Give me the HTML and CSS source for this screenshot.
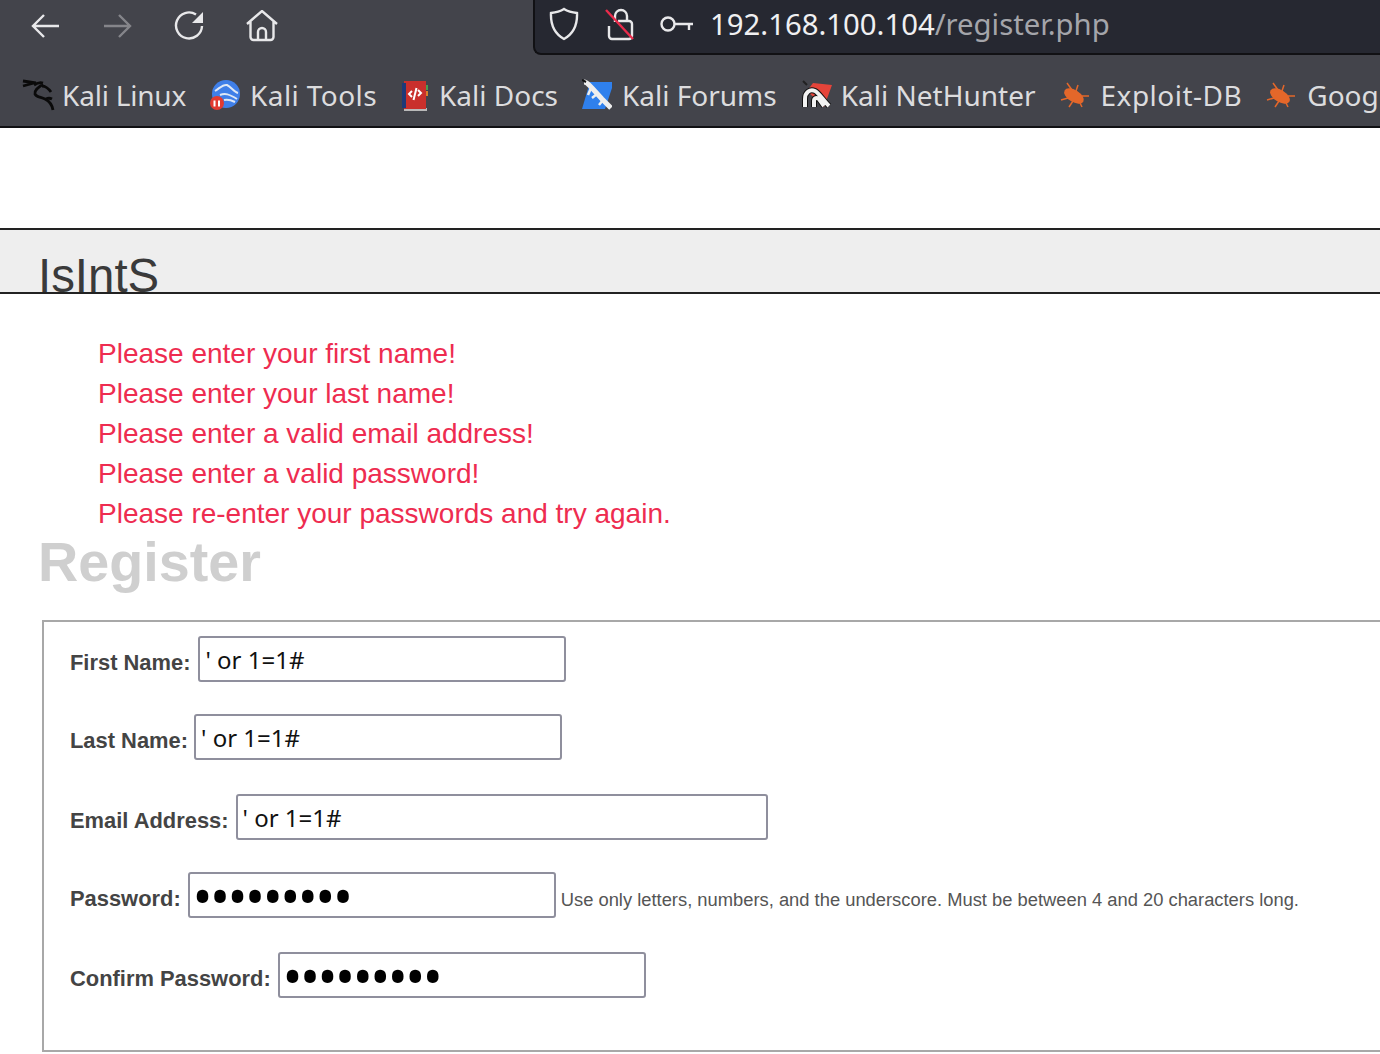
FILE: index.html
```html
<!DOCTYPE html>
<html lang="en">
<head>
<meta charset="utf-8">
<title>IsIntS - Register</title>
<link rel="stylesheet" href="styles.css">
</head>
<body>
<header class="chrome">
  <div class="toolbar">
    <nav class="nav">
      <svg class="ic" width="30" height="30" viewBox="0 0 30 30"><path d="M29 15H3M14 4 3 15l11 11"/></svg>
      <svg class="ic dim" width="30" height="30" viewBox="0 0 30 30"><path d="M2 15h26M17 4l11 11-11 11"/></svg>
      <svg class="ic" width="30" height="30" viewBox="0 0 30 30"><path d="M22 3.500A13 13 0 1 0 28 15"/><path class="fill" d="M29 1v11H18z"/></svg>
      <svg class="ic" width="32" height="32" viewBox="0 0 32 32"><path d="M1 14 16 1l15 13M4.500 11.500V27a3 3 0 0 0 3 3h17a3 3 0 0 0 3-3V11.500M12 30v-8a4 4 0 0 1 8 0v8"/></svg>
    </nav>
    <div class="urlbar">
      <svg class="ic" width="30" height="34" viewBox="0 0 30 34"><path d="M15 2c4 2.500 8 3.500 13 4 .5 11-2 20-13 26C4 26 1.500 17 2 6c5-.5 9-1.500 13-4z"/></svg>
      <svg class="ic lock" width="30" height="34" viewBox="0 0 30 34"><path d="M10 15V9a6 6 0 0 1 12 0v5"/><path d="M4 19v10a3 3 0 0 0 3 3h17a3 3 0 0 0 3-3V17a3 3 0 0 0-3-3H13"/><path class="slash" d="M1 3l27 29"/></svg>
      <svg class="ic" width="34" height="20" viewBox="0 0 34 20"><circle cx="8" cy="10" r="6.500"/><path d="M15 10h18M29 10v6"/></svg>
      <div class="url"><span class="host">192.168.100.104</span><span class="path">/register.php</span></div>
    </div>
  </div>
  <div class="bookmarks">
    <a class="bm gap-7 tight"><svg width="33" height="36" viewBox="0 0 33 36"><path class="kali" d="M1 3l13 2M1 8l11-3M12 7c3-2 6-3 9-2M21 6c-4 3-9 6-8 10 1 3 6 3 10 5 4 2 7 5 8 11M20 8c3 0 7 3 9 6M24 21c2-1 4-1 6 0"/></svg><span>Kali Linux</span></a>
    <a class="bm gap-10 wider"><svg width="30" height="34" viewBox="0 0 30 34"><circle cx="16" cy="15" r="14" fill="#3f7fe8"/><path d="M5 12c5-3 8-7 12-6 4 2 7 7 11 8M10 16c5-2 9-1 17 4M14 21c4-1 7 0 11 2" fill="none" stroke="#dfe8f5" stroke-width="2"/><circle cx="7" cy="24" r="7" fill="#e23a30"/><path d="M4.500 21.500v6M9 21.500v6" stroke="#fff" stroke-width="2"/></svg><span>Kali Tools</span></a>
    <a class="bm gap-10"><svg width="28" height="34" viewBox="0 0 28 34"><path fill="#b9b9b9" d="M3 29h23v3H3z"/><path fill="#c9302c" d="M3 2h22v28H3z"/><path fill="#1d3a78" d="M1 4h4v25H1z"/><path fill="#4a9d4e" d="M25 6h2v5h-2z"/><path fill="#d9822b" d="M25 12h2v5h-2z"/><path d="M11 12l-3 3 3 3M17 11l3 3-3 3M15.500 9l-3 12" fill="none" stroke="#fff" stroke-width="2"/></svg><span>Kali Docs</span></a>
    <a class="bm gap-10"><svg width="30" height="34" viewBox="0 0 30 34"><path fill="#2f80ed" d="M8 3h24l-9 27H0z"/><path d="M2 3c3 0 5 3 8 6l10 11 9 9" fill="none" stroke="#eee" stroke-width="5"/><path d="M9 9l-3 7M15 15l-5 4M21 21l-4 5" stroke="#eee" stroke-width="2.500"/><path d="M0 1l4 2" stroke="#111" stroke-width="2"/></svg><span>Kali Forums</span></a>
    <a class="bm gap-9"><svg width="31" height="34" viewBox="0 0 31 34"><path fill="#e5443a" d="M12 4l19 2-8 22L6 12z"/><path d="M4 28v-8c0-7 5-10 10-8 4 2 8 9 14 15M13 28v-6c0-3 3-4 5-2l5 7" fill="none" stroke="#111" stroke-width="6"/><path d="M4 28v-8c0-7 5-10 10-8 4 2 8 9 14 15M13 28v-6c0-3 3-4 5-2l5 7" fill="none" stroke="#f2f2f2" stroke-width="4"/><path d="M2 2l4 4" stroke="#222" stroke-width="2"/></svg><span>Kali NetHunter</span></a>
    <a class="bm gap-12 widest"><svg width="29" height="30" viewBox="0 0 29 30"><g class="bug"><ellipse cx="14" cy="15" rx="11" ry="6" transform="rotate(32 14 15)"/><path d="M7 2l5 7M1 19l7-2M9 26l4-6M29 15h-7M18 4l-2 6M22 26l-3-6"/></g></svg><span>Exploit-DB</span></a>
    <a class="bm gap-12"><svg width="29" height="30" viewBox="0 0 29 30"><g class="bug"><ellipse cx="14" cy="15" rx="11" ry="6" transform="rotate(32 14 15)"/><path d="M7 2l5 7M1 19l7-2M9 26l4-6M29 15h-7M18 4l-2 6M22 26l-3-6"/></g></svg><span>Google Hacking DB</span></a>
  </div>
</header>
<div class="site-band"><h1 class="site-title">IsIntS</h1></div>
<main class="content">
  <ul class="errors">
    <li>Please enter your first name!</li>
    <li>Please enter your last name!</li>
    <li>Please enter a valid email address!</li>
    <li>Please enter a valid password!</li>
    <li>Please re-enter your passwords and try again.</li>
  </ul>
  <h2 class="form-title">Register</h2>
  <form class="form-box">
    <div class="row wide-gap"><label>First Name:</label><input class="field" type="text" value="' or 1=1#"></div>
    <div class="row narrow-gap"><label>Last Name:</label><input class="field" type="text" value="' or 1=1#"></div>
    <div class="row"><label>Email Address:</label><input class="field wide" type="text" value="' or 1=1#"></div>
    <div class="row"><label>Password:</label><input class="field pw" type="password" value="123456789"><small class="hint">Use only letters, numbers, and the underscore. Must be between 4 and 20 characters long.</small></div>
    <div class="row"><label>Confirm Password:</label><input class="field pw" type="password" value="123456789"></div>
  </form>
</main>
</body>
</html>
```
FILE: styles.css
```css
* { box-sizing: border-box; }
html, body { margin: 0; height: 1054px; overflow: hidden; background: #fff; }
body { font-family: "Liberation Sans", Arial, sans-serif; }

.chrome { height: 128px; background: #43444b; border-bottom: 2px solid #111114; color: #e6e6e8; }
.toolbar { height: 55px; display: flex; align-items: flex-start; }
.nav { width: 533px; height: 52px; display: flex; align-items: center; gap: 42px; padding-left: 30px; }
.ic { fill: none; stroke: #e8e8ea; stroke-width: 2.4; flex: none; }
.ic .fill { fill: #e8e8ea; stroke: none; }
.ic.dim { opacity: .4; }
.ic .slash { stroke: #ea2b4b; }
.urlbar { flex: 1; height: 55px; background: #262831; border: 2px solid #111114; border-top: 0; border-right: 0; border-bottom-left-radius: 8px; display: flex; align-items: center; padding: 0 0 6px 14px; }
.urlbar .lock { margin-left: 26px; }
.urlbar .ic:nth-child(3) { margin-left: 25px; }
.url { font-family: "Noto Sans", sans-serif; font-size: 29.300px; margin-left: 16px; white-space: nowrap; }
.host { color: #f0f0f2; }
.path { color: #a4a5aa; }

.bookmarks { height: 71px; display: flex; align-items: center; gap: 24px; padding: 8px 0 0 22px; white-space: nowrap; overflow: hidden; font-family: "Noto Sans", sans-serif; font-size: 28px; color: #dcdcde; }
.bm { display: flex; align-items: center; flex: none; }
.bm svg { flex: none; margin-top: 3px; }
.gap-7 svg { margin-right: 7px; }
.gap-9 svg { margin-right: 9px; }
.gap-10 svg { margin-right: 10px; }
.gap-12 svg { margin-right: 12px; }
.tight { letter-spacing: -.2px; }
.wider { letter-spacing: .4px; }
.widest { letter-spacing: .5px; }
.kali { fill: none; stroke: #0a0a0a; stroke-width: 2.800; }
.bug ellipse { fill: #e4672a; }
.bug path { stroke: #e4672a; stroke-width: 1.500; fill: none; }

.site-band { margin-top: 100px; height: 66px; background: #eee; border-top: 2px solid #222; border-bottom: 2px solid #222; padding-left: 38px; overflow: hidden; }
.site-title { margin: 0; font-size: 47.400px; line-height: 62px; padding-top: 15px; font-weight: 400; color: #3a3a3a; }

.content { padding: 40px 0 0 39px; }
.errors { list-style: none; margin: 0; padding: 0 0 0 59px; font-size: 28px; line-height: 40px; color: #ee2c50; }
.form-title { margin: -2px 0 0 -1px; font-size: 55.700px; line-height: 60px; font-weight: 700; color: #cfcfcf; }
.form-box { margin: 28px 0 0 3px; width: 1500px; height: 432px; border: 2px solid #a8a8a8; padding: 14px 0 0 26px; display: flex; flex-direction: column; gap: 32px; }
.row { display: flex; align-items: center; height: 46px; }
.row:nth-child(even) { margin-bottom: 2px; }
.row label { font-size: 21.900px; font-weight: 700; color: #444; margin-right: 7px; padding-top: 7px; }
.row.wide-gap label { margin-right: 8px; }
.row.narrow-gap label { margin-right: 6px; }
.field { width: 368px; height: 46px; border: 2px solid #8f8f9d; border-radius: 3px; background: #fff; padding: 0 5px; font-family: "Noto Sans", sans-serif; font-size: 24px; color: #111; outline: 0; }
.field.wide { width: 532px; }
.field.pw { font-size: 52px; letter-spacing: -2px; padding: 0 3px; color: #000; }
.hint { font-size: 18.350px; color: #555; margin-left: 5px; padding-top: 10px; }
```
